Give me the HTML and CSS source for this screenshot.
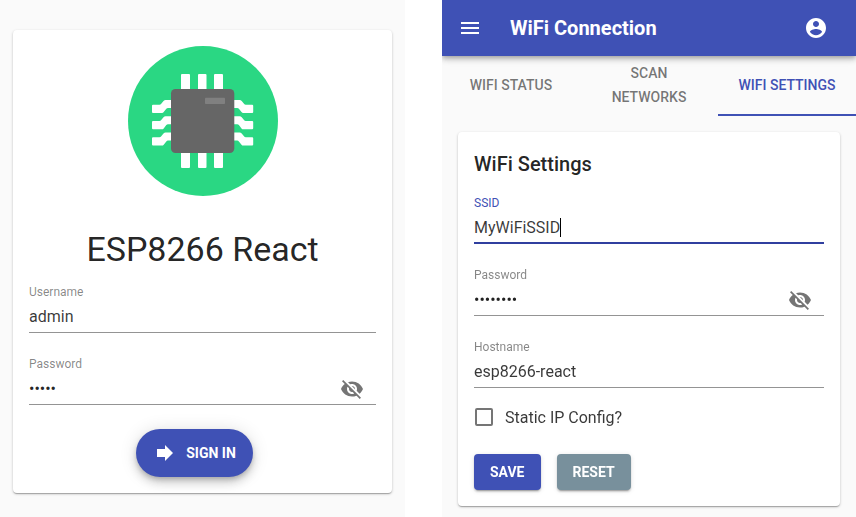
FILE: index.html
```html
<!DOCTYPE html>
<html lang="en">
<head>
<meta charset="utf-8">
<meta name="viewport" content="width=device-width, initial-scale=1">
<title>ESP8266 React</title>
<link rel="stylesheet" href="styles.css">
</head>
<body>
<svg class="defs" aria-hidden="true">
  <symbol id="eye-off" viewBox="0 0 24 24"><path d="M12 7c2.76 0 5 2.24 5 5 0 .65-.13 1.26-.36 1.83l2.92 2.92c1.51-1.26 2.7-2.89 3.43-4.75-1.73-4.39-6-7.5-11-7.5-1.4 0-2.74.25-3.98.7l2.16 2.16C10.74 7.13 11.35 7 12 7zM2 4.27l2.28 2.28.46.46C3.08 8.3 1.78 10.02 1 12c1.73 4.39 6 7.5 11 7.5 1.55 0 3.03-.3 4.38-.84l.42.42L19.73 22 21 20.73 3.27 3 2 4.27zM7.53 9.8l1.55 1.55c-.05.21-.08.43-.08.65 0 1.66 1.34 3 3 3 .22 0 .44-.03.65-.08l1.55 1.55c-.67.33-1.41.53-2.2.53-2.76 0-5-2.24-5-5 0-.79.2-1.53.53-2.2zm4.31-.78l3.15 3.15.02-.16c0-1.66-1.34-3-3-3l-.17.01z"/></symbol>
</svg>
<div class="screens">
  <main class="screen sign-in">
    <form class="card">
      <svg class="logo" viewBox="0 0 150 150" aria-hidden="true">
        <circle cx="75" cy="75" r="75" fill="#2ad783"/>
        <g fill="#fff">
          <rect x="53" y="28" width="9" height="94" rx="1"/>
          <rect x="70" y="28" width="8.500" height="94" rx="1"/>
          <rect x="86" y="28" width="9" height="94" rx="1"/>
          <g id="pins">
            <path id="pin" d="M25 58.700h6.500q1 0 1.500-.7l2.500-3q1-1 2-1H45v8h-5q-1 0-1.700.8l-2.600 3.300q-.7.900-1.700.9H25q-1 0-1-1v-6.300q0-1 1-1z"/>
            <use href="#pin" y="16.300"/>
            <use href="#pin" y="32.600"/>
          </g>
          <use href="#pins" transform="matrix(-1 0 0 1 149.200 0)"/>
        </g>
        <rect x="43" y="43" width="63.300" height="64" rx="4.500" fill="#666"/>
        <rect x="77" y="51.700" width="20" height="6.300" rx=".7" fill="#808080"/>
      </svg>
      <h1>ESP8266 React</h1>
      <div class="field">
        <label for="username">Username</label>
        <div class="control"><input id="username" type="text" value="admin"></div>
      </div>
      <div class="field">
        <label for="login-password">Password</label>
        <div class="control">
          <input id="login-password" type="password" value="admin">
          <button class="reveal" type="button" aria-label="Toggle password visibility"><svg class="icon"><use href="#eye-off"/></svg></button>
        </div>
      </div>
      <button class="fab" type="button">
        <svg class="icon" viewBox="0 0 24 24" aria-hidden="true"><path d="M12 8V4l8 8-8 8v-4H4V8z"/></svg>
        Sign In
      </button>
    </form>
  </main>

  <main class="screen">
    <header class="app-bar">
      <button class="bar-button" type="button" aria-label="Open menu"><svg class="icon" viewBox="0 0 24 24"><path d="M3 18h18v-2H3v2zm0-5h18v-2H3v2zm0-7v2h18V6H3z"/></svg></button>
      <h2>WiFi Connection</h2>
      <button class="bar-button account" type="button" aria-label="Account"><svg class="icon" viewBox="0 0 24 24"><path d="M12 2C6.480 2 2 6.480 2 12s4.480 10 10 10 10-4.480 10-10S17.520 2 12 2zm0 3c1.660 0 3 1.340 3 3s-1.340 3-3 3-3-1.340-3-3 1.340-3 3-3zm0 14.200c-2.500 0-4.710-1.280-6-3.220.03-1.990 4-3.080 6-3.080 1.990 0 5.970 1.090 6 3.080-1.290 1.940-3.500 3.220-6 3.220z"/></svg></button>
    </header>
    <nav class="tabs">
      <a href="#status">WiFi Status</a>
      <a href="#scan">Scan Networks</a>
      <a class="selected" href="#settings" aria-current="page">WiFi Settings</a>
    </nav>
    <form class="card settings">
      <h3>WiFi Settings</h3>
      <div class="field">
        <label for="ssid">SSID</label>
        <div class="control"><input id="ssid" class="hug" type="text" value="MyWiFiSSID" autofocus><span class="caret"></span></div>
      </div>
      <div class="field">
        <label for="wifi-password">Password</label>
        <div class="control">
          <input id="wifi-password" type="password" value="password">
          <button class="reveal" type="button" aria-label="Toggle password visibility"><svg class="icon"><use href="#eye-off"/></svg></button>
        </div>
      </div>
      <div class="field">
        <label for="hostname">Hostname</label>
        <div class="control"><input id="hostname" type="text" value="esp8266-react"></div>
      </div>
      <label class="check"><input type="checkbox">Static IP Config?</label>
      <div class="actions">
        <button class="raised" type="button">Save</button>
        <button class="raised secondary" type="button">Reset</button>
      </div>
    </form>
  </main>
</div>
<script src="app.js"></script>
</body>
</html>
```
FILE: app.js
```js
// Start editing at the end of the network name.
const ssid = document.getElementById("ssid");
ssid.focus();
ssid.setSelectionRange(ssid.value.length, ssid.value.length);
```
FILE: styles.css
```css
:root {
  --primary: #3f51b5;
  --text: rgba(0, 0, 0, 0.87);
  --value: rgba(0, 0, 0, 0.78);
  --muted: rgba(0, 0, 0, 0.54);
  --label: rgba(0, 0, 0, 0.48);
}

* { box-sizing: border-box; }

body {
  margin: 0;
  background: #fff;
  color: var(--text);
  font-family: Roboto, sans-serif;
  font-size: 16px;
}

h1, h2, h3 { margin: 0; }

button, input { font: inherit; color: inherit; }

button {
  border: 0;
  padding: 0;
  background: none;
  cursor: pointer;
}

.defs { position: absolute; width: 0; height: 0; }

.icon {
  display: block;
  width: 24px;
  height: 24px;
  fill: currentColor;
}

.screens {
  display: grid;
  grid-template-columns: 405fr 414fr;
  column-gap: 37px;
  min-height: 100vh;
}

.screen { background: #fafafa; }

.sign-in { padding: 30px 13px 24px; }

.card {
  display: flex;
  flex-direction: column;
  padding: 16px;
  border-radius: 4px;
  background: #fff;
  box-shadow: 0 1px 3px rgba(0, 0, 0, 0.2), 0 1px 1px rgba(0, 0, 0, 0.14), 0 2px 1px -1px rgba(0, 0, 0, 0.12);
}

.settings { margin: 16px 16px 11px; }

.logo {
  width: 150px;
  height: 150px;
  align-self: center;
}

h1 {
  margin-top: 33px;
  font-size: 34px;
  font-weight: 400;
  line-height: 40px;
  text-align: center;
}

.field { margin: 16px 0 8px; }

.field label {
  display: block;
  color: var(--label);
  font-size: 12px;
  line-height: 14px;
  padding-bottom: 2px;
}

.control {
  display: flex;
  align-items: center;
  height: 32px;
  border-bottom: 1px solid rgba(0, 0, 0, 0.42);
}

.control input {
  flex: 1;
  min-width: 0;
  height: 100%;
  padding: 0;
  border: 0;
  outline: 0;
  background: none;
  color: var(--value);
}

.control input[type="password"] { color: var(--text); }

.control .hug {
  flex: none;
  max-width: 100%;
  field-sizing: content;
  caret-color: transparent;
}

.caret {
  width: 1px;
  height: 19px;
  visibility: hidden;
  background: #000;
}

.hug:focus + .caret { visibility: visible; }

.field:focus-within label { color: var(--primary); }

.control:focus-within { border-bottom: 2px solid #303f9f; }

.reveal {
  display: grid;
  place-items: center;
  width: 48px;
  color: var(--muted);
}

.fab, .raised {
  color: #fff;
  background: var(--primary);
  font-size: 14px;
  font-weight: 700;
  text-transform: uppercase;
}

.fab {
  display: flex;
  align-items: center;
  align-self: center;
  gap: 9px;
  height: 48px;
  margin: 16px 16px 0 0;
  padding: 0 17px;
  border-radius: 24px;
  box-shadow: 0 3px 5px -1px rgba(0, 0, 0, 0.2), 0 6px 10px rgba(0, 0, 0, 0.14), 0 1px 18px rgba(0, 0, 0, 0.12);
}

.app-bar {
  position: relative;
  display: flex;
  align-items: center;
  height: 56px;
  padding: 0 28px 0 16px;
  background: var(--primary);
  color: #fff;
  box-shadow: 0 2px 4px -1px rgba(0, 0, 0, 0.2), 0 4px 5px rgba(0, 0, 0, 0.14), 0 1px 10px rgba(0, 0, 0, 0.12);
  clip-path: inset(0 0 -16px);
}

.app-bar h2 {
  margin-left: 28px;
  font-size: 20px;
  font-weight: 700;
  line-height: 32px;
}

.account { margin-left: auto; }

.tabs {
  display: grid;
  grid-template-columns: repeat(3, 1fr);
}

.tabs a {
  display: flex;
  align-items: center;
  justify-content: center;
  height: 60px;
  padding: 0 16px;
  border-bottom: 2px solid transparent;
  color: var(--muted);
  font-size: 14px;
  font-weight: 500;
  line-height: 24px;
  text-align: center;
  text-decoration: none;
  text-transform: uppercase;
}

.tabs .selected {
  color: var(--primary);
  border-bottom-color: var(--primary);
}

h3 {
  font-size: 20px;
  font-weight: 500;
  line-height: 32px;
}

.check {
  display: flex;
  align-items: center;
  gap: 12px;
  height: 42px;
  color: var(--value);
}

.check input {
  appearance: none;
  width: 18px;
  height: 18px;
  margin: 0 0 0 1px;
  border: 2px solid var(--muted);
  border-radius: 2px;
}

.check input:checked {
  background: var(--primary);
  border-color: var(--primary);
}

.actions {
  display: flex;
  gap: 16px;
  margin-top: 16px;
}

.raised {
  height: 36px;
  padding: 0 16px;
  border-radius: 4px;
  box-shadow: 0 3px 1px -2px rgba(0, 0, 0, 0.2), 0 2px 2px rgba(0, 0, 0, 0.14), 0 1px 5px rgba(0, 0, 0, 0.12);
}

.secondary { background: #78909c; }
```
